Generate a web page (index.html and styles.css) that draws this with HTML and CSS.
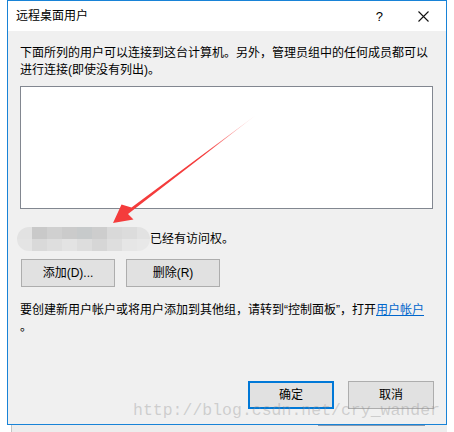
FILE: index.html
```html
<!DOCTYPE html>
<html lang="zh-CN">
<head>
<meta charset="utf-8">
<title>远程桌面用户</title>
<link rel="stylesheet" href="styles.css">
</head>
<body>
<div class="window">
  <div class="titlebar">
    <span class="title">远程桌面用户</span>
    <span class="help">?</span>
    <svg class="close" width="11" height="11" viewBox="0 0 11 11"><path d="M0.5 0.5 L10.5 10.5 M10.5 0.5 L0.5 10.5" stroke="#111" stroke-width="1.1" fill="none"/></svg>
  </div>
  <div class="content">
    <p class="intro">下面所列的用户可以连接到这台计算机。另外，管理员组中的任何成员都可以进行连接(即使没有列出)。</p>
    <div class="listbox"></div>
    <div class="access-row">
      <div class="blurred">
        <div class="cells">
          <i class="c1"></i><i class="c2"></i><i class="c3"></i><i class="c4"></i><i class="c5"></i><i class="c6"></i><i class="c7"></i><i class="c8"></i><i class="c9"></i>
        </div>
        <div class="cells">
          <i class="d1"></i><i class="d2"></i><i class="d3"></i><i class="d4"></i><i class="d5"></i><i class="d6"></i><i class="d7"></i><i class="d8"></i><i class="d9"></i>
        </div>
      </div>
      <span class="access-text">已经有访问权。</span>
    </div>
    <div class="btn-row">
      <button class="btn">添加(D)...</button>
      <button class="btn">删除(R)</button>
    </div>
    <p class="hint"><span class="nowrap">要创建新用户帐户或将用户添加到其他组，请转到“控制面板”，打开<a class="link" href="#">用户帐户</a></span><br>。</p>
    <div class="footer">
      <button class="btn primary">确定</button>
      <button class="btn">取消</button>
    </div>
  </div>
</div>
<div class="under"><div class="under-bar"></div></div>
<div class="watermark">http://blog.csdn.net/cry_wander</div>
<svg class="arrow" width="454" height="432" viewBox="0 0 454 432">
  <defs>
    <linearGradient id="tailfade" gradientUnits="userSpaceOnUse" x1="256" y1="115" x2="205" y2="154">
      <stop offset="0" stop-color="#f43c3c" stop-opacity="0.1"/>
      <stop offset="1" stop-color="#f43c3c" stop-opacity="1"/>
    </linearGradient>
  </defs>
  <polygon points="256,115 131.5,207.5 121.5,204.5 113,223 133.5,219.5 128,214" fill="url(#tailfade)"/>
</svg>
</body>
</html>
```

FILE: styles.css
```css
html, body {
  margin: 0;
  padding: 0;
}

body {
  width: 454px;
  height: 432px;
  background: #ffffff;
  font-family: "Liberation Sans", "Noto Sans CJK SC", sans-serif;
  font-size: 12px;
  color: #000;
  position: relative;
  overflow: hidden;
}

.window {
  margin-left: 7px;
  width: 440px;
  height: 425px;
  box-sizing: border-box;
  border: 1px solid #1883d7;
  background: #f0f0f0;
  display: flex;
  flex-direction: column;
}

.titlebar {
  height: 30px;
  flex: none;
  background: #ffffff;
  display: flex;
  align-items: center;
  padding-left: 8px;
}

.title {
  line-height: 17px;
}

.help {
  margin-left: auto;
  margin-right: 35px;
  font-family: "Liberation Sans", sans-serif;
  font-size: 13px;
  line-height: 17px;
}

.close {
  margin-right: 17px;
  display: block;
}

.content {
  flex: 1;
  display: flex;
  flex-direction: column;
  padding: 14px 12px 15px 12px;
}

.intro {
  margin: 0;
  line-height: 17px;
  width: 413px;
}

.listbox {
  margin-top: 7px;
  width: 413px;
  height: 123px;
  box-sizing: border-box;
  border: 1px solid #828790;
  background: #ffffff;
}

.access-row {
  margin-top: 18px;
  height: 24px;
  display: flex;
  align-items: center;
}

.blurred {
  margin-left: -3px;
  width: 133px;
  height: 24px;
  border-radius: 12px;
  overflow: hidden;
  display: flex;
  flex-direction: column;
  filter: blur(0.6px);
}

.cells {
  display: flex;
  height: 12px;
}

.cells i {
  display: block;
  width: 15px;
  height: 12px;
  flex: none;
}

.c1 { background: #e2e2e2; }
.c2 { background: #c9c9c9; }
.c3 { background: #d0d0d0; }
.c4 { background: #cbcbcb; }
.c5 { background: #c7cacb; }
.c6 { background: #cdcdcd; }
.c7 { background: #d9d9d9; }
.c8 { background: #dcdcdc; }
.c9 { background: #e2e2e2; }
.d1 { background: #e4e4e4; }
.d2 { background: #d9d9d9; }
.d3 { background: #dedede; }
.d4 { background: #e3e3e3; }
.d5 { background: #dddddd; }
.d6 { background: #d6d6d6; }
.d7 { background: #dedede; }
.d8 { background: #e6e6e6; }
.d9 { background: #e8e8e8; }

.access-text {
  line-height: 17px;
}

.btn-row {
  margin-top: 8px;
  display: flex;
  gap: 11px;
  padding-left: 1px;
}

.btn {
  width: 94px;
  height: 28px;
  box-sizing: border-box;
  border: 1px solid #adadad;
  background: #e1e1e1;
  font-family: "Liberation Sans", "Noto Sans CJK SC", sans-serif;
  font-size: 12px;
  color: #000;
  padding: 0;
  margin: 0;
  line-height: 17px;
}

.hint {
  margin: 15px 0 0 0;
  line-height: 17px;
}

.nowrap {
  white-space: nowrap;
}

.link {
  color: #0066cc;
  text-decoration: underline;
}

.footer {
  margin-top: auto;
  display: flex;
  justify-content: flex-end;
  gap: 14px;
}

.footer .btn {
  width: 86px;
}

.btn.primary {
  border: 2px solid #0078d7;
}

.under {
  height: 7px;
  margin-left: 11px;
  margin-right: 7px;
  border-left: 1px solid #c4c4c4;
  background: #ededed;
  display: flex;
  padding-left: 306px;
}

.under-bar {
  width: 107px;
  height: 1px;
  background: #8a9bb0;
}

.watermark {
  position: absolute;
  left: 133px;
  top: 401px;
  font-family: "Liberation Mono", monospace;
  font-size: 16.5px;
  line-height: 20px;
  color: rgba(140, 140, 140, 0.35);
  white-space: nowrap;
  pointer-events: none;
}

.arrow {
  position: absolute;
  left: 0;
  top: 0;
  pointer-events: none;
}
```
